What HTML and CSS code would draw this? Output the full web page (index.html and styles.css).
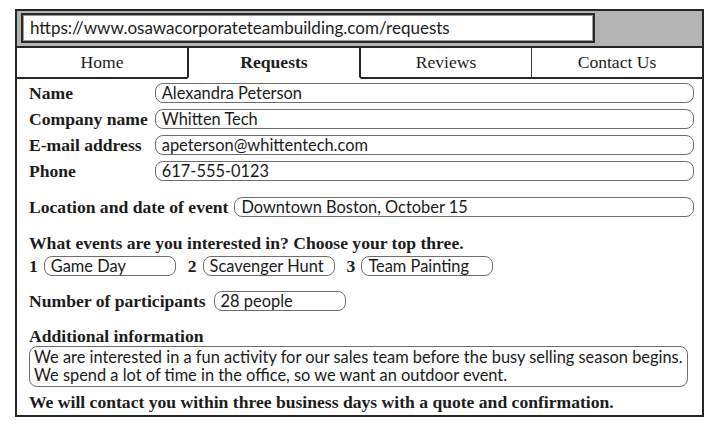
FILE: index.html
```html
<!DOCTYPE html>
<html lang="en">
<head>
<meta charset="utf-8">
<title>Requests</title>
<link rel="stylesheet" href="styles.css">
</head>
<body>
<div class="frame">
  <div class="addr"><div class="url">https://www.osawacorporateteambuilding.com/requests</div></div>
  <nav class="tabs">
    <div class="tab">Home</div>
    <div class="tab active">Requests</div>
    <div class="tab">Reviews</div>
    <div class="tab last">Contact Us</div>
  </nav>
  <div class="form">
    <div class="grid">
      <span class="lbl">Name</span><div class="field">Alexandra Peterson</div>
      <span class="lbl">Company name</span><div class="field">Whitten Tech</div>
      <span class="lbl">E-mail address</span><div class="field">apeterson@whittentech.com</div>
      <span class="lbl">Phone</span><div class="field">617-555-0123</div>
    </div>
    <div class="row loc"><span class="lbl">Location and date of event</span><div class="field grow">Downtown Boston, October 15</div></div>
    <div class="lbl q">What events are you interested in? Choose your top three.</div>
    <div class="choices">
      <div class="choice"><span class="lbl">1</span><div class="field short">Game Day</div></div>
      <div class="choice"><span class="lbl">2</span><div class="field short">Scavenger Hunt</div></div>
      <div class="choice"><span class="lbl">3</span><div class="field short">Team Painting</div></div>
    </div>
    <div class="row part"><span class="lbl">Number of participants</span><div class="field short">28 people</div></div>
    <div class="lbl addl">Additional information</div>
    <div class="field area">We are interested in a fun activity for our sales team before the busy selling season begins.<br>We spend a lot of time in the office, so we want an outdoor event.</div>
    <div class="lbl note">We will contact you within three business days with a quote and confirmation.</div>
  </div>
</div>
</body>
</html>
```
FILE: styles.css
```css
* { box-sizing: border-box; }
html, body { margin: 0; padding: 0; background: #fff; }
body { color: #1c1c1c; }

.frame {
  margin: 9px 0 0 15px;
  width: 689px;
  height: 408px;
  border: 2px solid #262626;
  display: flex;
  flex-direction: column;
}

.addr {
  background: #b4b4b4;
  padding: 2px 4px 3px 4px;
  height: 35px;
}
.url {
  width: 574px;
  height: 30px;
  background: #fff;
  border: 2px solid #2a2a2a;
  box-shadow: inset 0 0 0 1px #9a9a9a;
  padding-left: 7px;
  font-family: Lato, "Liberation Sans", sans-serif;
  font-size: 17px;
  line-height: 26px;
  white-space: nowrap;
}

.tabs {
  display: flex;
  border-top: 2px solid #262626;
  height: 33px;
}
.tab {
  flex: 1;
  text-align: center;
  font-family: "Liberation Serif", serif;
  font-size: 17.6px;
  line-height: 29px;
  border-bottom: 2px solid #262626;
}
.tab.active {
  font-weight: bold;
  border-bottom-color: transparent;
  border-left: 2px solid #262626;
  border-right: 2px solid #262626;
}
.tab.last { border-left: 1px solid #3a3a3a; }

.form {
  padding: 4px 8px 0 12px;
}
.lbl {
  font-family: "Liberation Serif", serif;
  font-weight: bold;
  font-size: 17.6px;
  line-height: 20px;
  white-space: nowrap;
}
.field {
  height: 20px;
  border: 1.5px solid #6e6e6e;
  border-radius: 8px;
  padding-left: 6px;
  font-family: Lato, "Liberation Sans", sans-serif;
  font-size: 16.4px;
  line-height: 17px;
  white-space: nowrap;
  color: #1a1a1a;
}

.grid {
  display: grid;
  grid-template-columns: auto 1fr;
  column-gap: 7px;
  row-gap: 6px;
  align-items: center;
}

.row {
  display: flex;
  align-items: center;
  gap: 6px;
}
.grow { flex: 1; }
.loc { margin-top: 16px; }
.q { display: block; margin-top: 16px; }
.choices {
  display: flex;
  gap: 12px;
  margin-top: 3px;
}
.choice {
  display: flex;
  align-items: center;
  gap: 6px;
}
.short { width: 132px; }
.part { margin-top: 15px; gap: 8px; }
.addl { display: block; margin-top: 15px; }
.area {
  height: 41px;
  margin-right: 6px;
  padding: 1px 0 0 4px;
  line-height: 18px;
}
.note { display: block; margin-top: 5px; }
```
